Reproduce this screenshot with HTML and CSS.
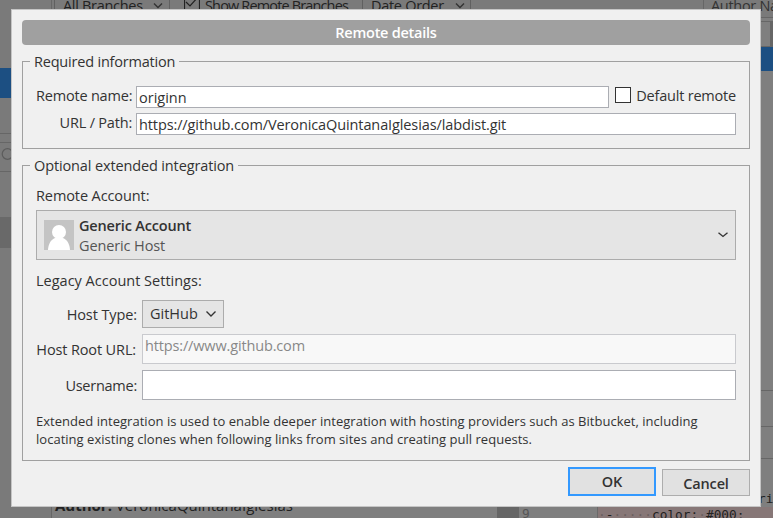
FILE: index.html
```html
<!DOCTYPE html>
<html lang="en">
<head>
<meta charset="utf-8">
<title>Remote details</title>
<link rel="stylesheet" href="styles.css">
</head>
<body>
<div class="app">
  <aside class="sidebar">
    <div class="side-top"></div>
    <div class="side-selected"></div>
    <div class="side-gap"></div>
    <div class="side-rule"></div>
    <div class="side-search"><svg width="20" height="20" viewBox="0 0 20 20"><circle cx="7.500" cy="7" r="5.300" fill="none" stroke="#5c5c5c" stroke-width="1.200"/></svg></div>
    <div class="side-gap2"></div>
    <div class="side-active"></div>
  </aside>
  <main class="workspace">
    <div class="toolbar">
      <div class="bg-combo branches"><span>All Branches</span><svg class="chev" width="10" height="6" viewBox="0 0 10 6"><path d="M1 .500l4 4 4-4"/></svg></div>
      <div class="bg-check"><svg width="16" height="16" viewBox="0 0 16 16"><path d="M.5.5h15v15H.5zM2 8l4 4L14 3" fill="none" stroke="#222" stroke-width="1.200"/></svg><span>Show Remote Branches</span></div>
      <div class="bg-combo order"><span>Date Order</span><svg class="chev" width="10" height="6" viewBox="0 0 10 6"><path d="M1 .500l4 4 4-4"/></svg></div>
      <div class="bg-author">Author Name</div>
    </div>
    <div class="history">
      <div class="history-head"></div>
      <div class="history-selected"></div>
      <div class="history-rows"></div>
      <div class="line-row tall"></div>
      <div class="line-row"></div>
      <div class="line-row short"></div>
    </div>
    <div class="details">
      <div class="commit"><div><b>Author:</b> <span>VeronicaQuintanaIglesias</span></div><div class="mail">&lt;veronica@PC-Desk.net&gt;</div></div>
      <div class="gutter-bar"></div>
      <div class="gutter">9</div>
      <div class="code"><div class="code-prev">ri</div><div class="removed"><i>·</i>-<i>·····</i>color:<i>·</i>#000;</div></div>
    </div>
  </main>
</div>

<div class="dialog">
  <h1 class="title"><span>Remote details</span></h1>
  <section class="group required">
    <h2 class="legend t-req"><span>Required information</span></h2>
    <div class="row name-row">
      <label class="label">Remote name:</label>
      <div class="input"><span>originn</span></div>
      <div class="checkbox"></div>
      <span class="t-default">Default remote</span>
    </div>
    <div class="row path-row">
      <label class="label">URL / Path:</label>
      <div class="input"><span class="t-url">https://github.com/VeronicaQuintanaIglesias/labdist.git</span></div>
    </div>
  </section>
  <section class="group optional">
    <h2 class="legend t-opt"><span>Optional extended integration</span></h2>
    <div class="subhead"><span class="t-remote">Remote Account:</span></div>
    <div class="account">
      <svg class="avatar" width="30" height="30" viewBox="0 0 30 30"><path fill="#c4c4c4" d="M0 0h30v30H0z"/><circle cx="15" cy="12" r="7" fill="#fff"/><path fill="#fff" d="M4 30c.3-6 3-10.500 7-12h8c4 1.500 6.700 6 7 12z"/></svg>
      <div class="account-text"><b>Generic Account</b><span>Generic Host</span></div>
      <svg class="chev" width="10" height="6" viewBox="0 0 10 6"><path d="M.5.8L5 4.500 9.500.8"/></svg>
    </div>
    <div class="subhead legacy"><span>Legacy Account Settings:</span></div>
    <div class="form">
      <label class="t-type">Host Type:</label>
      <div class="select"><span>GitHub</span><svg class="chev" width="10" height="6" viewBox="0 0 10 6"><path d="M.5.5L5 5 9.500.5"/></svg></div>
      <label class="t-root">Host Root URL:</label>
      <div class="field disabled"><span>https://www.github.com</span></div>
      <label class="t-user">Username:</label>
      <div class="field"></div>
    </div>
    <p class="note">Extended integration is used to enable deeper integration with hosting providers such as Bitbucket, including<br>locating existing clones when following links from sites and creating pull requests.</p>
  </section>
  <footer class="actions"><button class="ok">OK</button><button class="cancel">Cancel</button></footer>
</div>
</body>
</html>
```
FILE: styles.css
```css
* { box-sizing: border-box; }
body { margin: 0; width: 773px; height: 518px; overflow: hidden; background: #7f7f7f; color: #333; font: 14.5px/20px "Open Sans", "Noto Sans", sans-serif; white-space: nowrap; }
h1, h2, p { margin: 0; font: inherit; }
span { display: inline-block; }
svg { flex: none; }
.chev { fill: none; stroke: #333; stroke-width: 1.35; }

.app { display: flex; height: 518px; color: #222; }
.sidebar { width: 52px; background: #7a7a7a; border-right: 1px solid #666; flex: none; }
.side-top { height: 68px; }
.side-selected { height: 30px; background: #1c4f82; }
.side-gap { height: 35px; }
.side-rule { height: 9px; border-top: 1px solid #666; }
.side-search { height: 30px; border: solid #666; border-width: 1px 0; padding-top: 4px; }
.side-gap2 { height: 45px; }
.side-active { height: 31px; background: #696969; }
.workspace { flex: 1; display: flex; flex-direction: column; min-width: 0; }
.toolbar { height: 18px; display: flex; overflow: hidden; background: #7a7a7a; border-bottom: 1px solid #666; }
.toolbar span { margin-top: -4px; flex: none; }
.bg-combo { border: solid #606060; border-width: 0 1px; display: flex; flex: none; }
.bg-combo .chev { margin-top: 3px; }
.branches { width: 116px; margin-left: 2px; padding-left: 8px; gap: 10px; letter-spacing: -.3px; }
.bg-check { width: 192px; flex: none; padding-left: 14px; display: flex; gap: 5px; letter-spacing: -.85px; }
.bg-check svg { margin-top: -6px; }
.order { width: 109px; padding-left: 8px; gap: 11px; letter-spacing: -.3px; }
.bg-author { margin-left: 232px; padding-left: 7px; border-left: 1px solid #666; flex: 1; color: #333; line-height: 12px; letter-spacing: -.3px; }
.history { flex: none; }
.history-head { height: 26px; margin-top: 3px; border: solid #666; border-width: 1px 3px 1px 0; }
.history-selected { height: 24px; background: #1c4f82; }
.history-rows { height: 319px; }
.line-row { height: 32px; border-top: 1px solid #666; }
.line-row.tall { height: 36px; }
.line-row.short { height: 33px; }
.details { display: flex; flex: 1; min-height: 0; }
.commit { width: 445px; flex: none; padding: 4px 0 0 3px; font-size: 15px; line-height: 20px; }
.commit .mail { padding-left: 34px; }
.gutter-bar { width: 22px; flex: none; background: #666; }
.gutter { width: 79px; flex: none; padding: 13px 0 0 3px; color: #555; font: 12.8px/20px "DejaVu Sans Mono", monospace; border-right: 1px solid #6a6a6a; }
.code { flex: 1; font: 12.8px/16px "DejaVu Sans Mono", monospace; }
.code-prev { height: 16px; padding-left: 160px; }
.removed { height: 11px; background: #877777; line-height: 16px; }
.removed i { font-style: normal; color: #6b5f5f; }

.dialog { position: absolute; left: 11px; top: 9px; width: 750px; height: 498px; background: #f0f0f0; border: 1px solid #c5c5c5; padding: 10px; display: flex; flex-direction: column; }
.title { height: 25px; border-radius: 4px; background: #a0a0a0; color: #fff; font-weight: 600; text-align: center; line-height: 25px; letter-spacing: -.25px; }
.group { border: 1px solid #a0a0a0; padding: 0 13px; }
.required { height: 88px; margin-top: 16px; }
.optional { height: 296px; margin-top: 16px; }
.legend { width: max-content; height: 20px; margin: -10px 0 0 -6px; padding: 0 4px 0 4px; background: #f0f0f0; }
.t-req { letter-spacing: -.2px; }
.t-opt { letter-spacing: -.13px; }
.row { display: flex; height: 22px; }
.name-row { margin-top: 14px; }
.path-row { margin-top: 5px; }
.label { width: 96px; margin-right: 4px; text-align: right; line-height: 19px; letter-spacing: -.2px; }
.input { flex: 1; background: #fff; border: 1px solid #abadb3; padding-left: 2px; line-height: 22px; }
.t-url { letter-spacing: -.11px; }
.checkbox { width: 16px; height: 16px; margin: 1px 5px 0 6px; border: 1px solid #333; background: #fff; }
.t-default { line-height: 19px; letter-spacing: -.2px; }
.subhead { height: 20px; margin-top: 10px; }
.t-remote { letter-spacing: -.1px; }
.account { height: 50px; margin-top: 4px; border: 1px solid #acacac; background: #e5e5e5; display: flex; align-items: center; padding: 0 7px; }
.account-text { flex: 1; margin: 2px 0 0 5px; display: flex; flex-direction: column; }
.account-text b { font-weight: 600; letter-spacing: -.17px; }
.account-text span { color: #555; letter-spacing: -.12px; }
.legacy { margin-top: 11px; }
.form { display: grid; grid-template-columns: 101px 594px; column-gap: 5px; row-gap: 6px; grid-template-rows: 28px 30px 30px; margin-top: 9px; }
.form label { text-align: right; line-height: 30px; }
.form .t-type { letter-spacing: -.1px; }
.form .t-root { width: 100px; line-height: 32px; letter-spacing: -.13px; }
.form .t-user { line-height: 32px; letter-spacing: -.25px; }
.select { width: 82px; border: 1px solid #acacac; background: #e5e5e5; display: flex; align-items: center; justify-content: space-between; padding: 0 7px; }
.field { border: 1px solid #abadb3; background: #fff; padding-left: 2px; line-height: 22px; }
.disabled { background: #f8f8f8; border-color: #c9cace; color: #888; letter-spacing: -.15px; }
.note { margin-top: 12px; font-size: 13px; line-height: 18px; letter-spacing: .025px; }
.actions { display: flex; justify-content: flex-end; align-items: flex-end; gap: 6px; margin-top: 6px; }
button { width: 88px; padding: 0; background: #e1e1e1; color: #333; font: 600 14.5px "Open Sans", sans-serif; letter-spacing: -.15px; }
.ok { height: 29px; border: 2px solid #3399ff; }
.cancel { height: 27px; border: 1px solid #adadad; padding-top: 2px; }
```
